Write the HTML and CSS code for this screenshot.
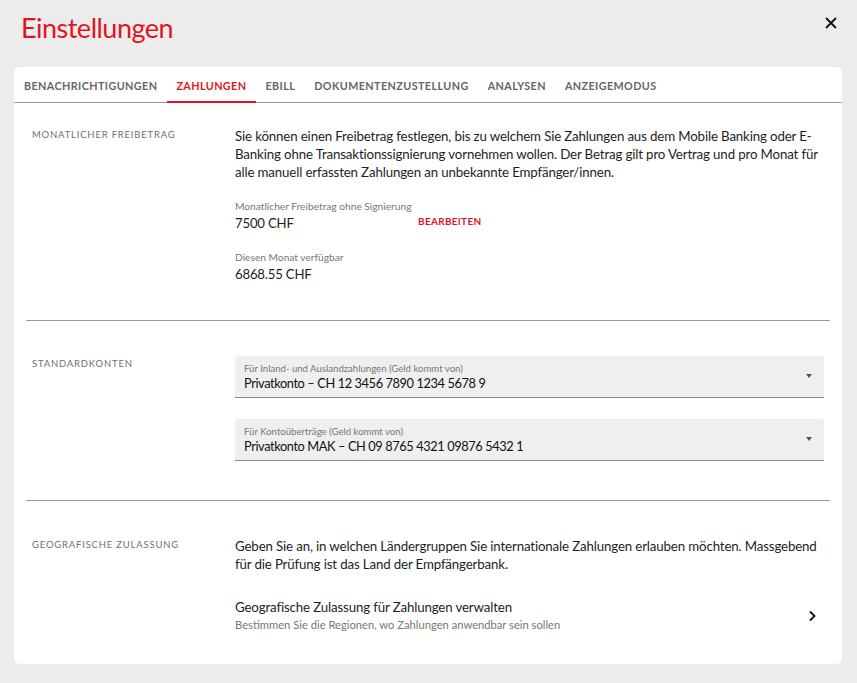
FILE: index.html
```html
<!DOCTYPE html>
<html lang="de">
<head>
<meta charset="utf-8">
<title>Einstellungen</title>
<link rel="stylesheet" href="styles.css">
</head>
<body>
<header class="top">
  <h1 class="title">Einstellungen</h1>
  <button class="close" aria-label="Schliessen">
    <svg width="12" height="12" viewBox="0 0 12 12"><path d="M1 1L11 11M11 1L1 11" stroke="#111" stroke-width="1.8" fill="none"/></svg>
  </button>
</header>
<main class="card">
  <nav class="tabs">
    <span class="tab">Benachrichtigungen</span>
    <span class="tab active">Zahlungen</span>
    <span class="tab">eBill</span>
    <span class="tab">Dokumentenzustellung</span>
    <span class="tab">Analysen</span>
    <span class="tab">Anzeigemodus</span>
  </nav>

  <section class="section first">
    <div class="label">Monatlicher Freibetrag</div>
    <div class="content">
      <p class="text">Sie können einen Freibetrag festlegen, bis zu welchem Sie Zahlungen aus dem Mobile Banking oder E-Banking ohne Transaktionssignierung vornehmen wollen. Der Betrag gilt pro Vertrag und pro Monat für alle manuell erfassten Zahlungen an unbekannte Empfänger/innen.</p>
      <div class="field-row">
        <div class="field">
          <div class="small">Monatlicher Freibetrag ohne Signierung</div>
          <div class="value">7500 CHF</div>
        </div>
        <a class="edit">Bearbeiten</a>
      </div>
      <div class="field">
        <div class="small">Diesen Monat verfügbar</div>
        <div class="value">6868.55 CHF</div>
      </div>
    </div>
  </section>

  <section class="section middle">
    <div class="label">Standardkonten</div>
    <div class="content selects">
      <div class="select">
        <div class="select-text">
          <div class="select-label">Für Inland- und Auslandzahlungen (Geld kommt von)</div>
          <div class="select-value">Privatkonto – CH 12 3456 7890 1234 5678 9</div>
        </div>
        <span class="caret"></span>
      </div>
      <div class="select">
        <div class="select-text">
          <div class="select-label">Für Kontoüberträge (Geld kommt von)</div>
          <div class="select-value">Privatkonto MAK – CH 09 8765 4321 09876 5432 1</div>
        </div>
        <span class="caret"></span>
      </div>
    </div>
  </section>

  <section class="section last">
    <div class="label">Geografische Zulassung</div>
    <div class="content">
      <p class="text">Geben Sie an, in welchen Ländergruppen Sie internationale Zahlungen erlauben möchten. Massgebend für die Prüfung ist das Land der Empfängerbank.</p>
      <div class="link-row">
        <div>
          <div class="link-title">Geografische Zulassung für Zahlungen verwalten</div>
          <div class="link-sub">Bestimmen Sie die Regionen, wo Zahlungen anwendbar sein sollen</div>
        </div>
        <svg class="chev" width="8" height="12" viewBox="0 0 8 12"><path d="M2 1.5L6.5 6L2 10.5" stroke="#111" stroke-width="1.8" fill="none"/></svg>
      </div>
    </div>
  </section>
</main>
</body>
</html>
```

FILE: styles.css
```css
* { box-sizing: border-box; }
html, body { margin: 0; padding: 0; }
body {
  background: #ececec;
  font-family: "Lato", "Noto Sans", sans-serif;
  color: #1e1e1e;
  width: 857px;
  height: 683px;
  overflow: hidden;
}
.top {
  display: flex;
  align-items: center;
  justify-content: space-between;
  height: 57px;
  padding: 0 20px 0 21px;
}
.title {
  margin: 0 0 3px;
  font-weight: 400;
  font-size: 27px;
  color: #e3141e;
  letter-spacing: -0.5px;
}
.close {
  align-self: flex-start;
  margin-top: 17px;
  border: 0;
  background: none;
  padding: 0;
  width: 12px;
  height: 12px;
  display: flex;
}
.card {
  margin: 10px 15px 0 14px;
  background: #fff;
  border-radius: 6px;
  padding-bottom: 30px;
}
.tabs {
  display: flex;
  height: 36px;
  border-bottom: 1px solid #9a9a9a;
}
.tab {
  display: flex;
  align-items: center;
  padding: 2px 9.5px 0;
  font-size: 10.8px;
  font-weight: 700;
  letter-spacing: 0.4px;
  text-transform: uppercase;
  color: #666;
}
.tab:first-child { padding-left: 10px; }
.tab.active {
  color: #e3141e;
  border-bottom: 2px solid #e3141e;
  margin-bottom: -1px;
}
.section {
  display: flex;
  margin: 0 12px;
  border-bottom: 1px solid #9a9a9a;
}
.section.first { padding: 24px 0 37px; }
.section.middle { padding: 35px 0 39px; }
.section.last { border-bottom: 0; padding: 36px 0 0; }
.label {
  width: 209px;
  flex: none;
  padding: 2px 0 0 6px;
  font-size: 9.5px;
  letter-spacing: 0.8px;
  text-transform: uppercase;
  color: #6f6f6f;
}
.content {
  flex: 1;
  padding-right: 6px;
}
.text {
  margin: 0;
  font-size: 13.3px;
  letter-spacing: -0.15px;
  line-height: 18px;
  color: #1e1e1e;
}
.field-row {
  display: flex;
  align-items: flex-end;
  margin-top: 18px;
}
.field-row .field { width: 183px; }
.field-row + .field { margin-top: 18px; }
.small {
  font-size: 10.2px;
  color: #777;
  line-height: 14px;
}
.value {
  font-size: 13.2px;
  letter-spacing: -0.2px;
  line-height: 18px;
  margin-top: 1px;
}
.edit {
  font-size: 10px;
  font-weight: 700;
  letter-spacing: 0.3px;
  text-transform: uppercase;
  color: #e3141e;
  padding-bottom: 5px;
}
.selects {
  display: flex;
  flex-direction: column;
  gap: 21px;
}
.select {
  height: 42px;
  display: flex;
  align-items: center;
  justify-content: space-between;
  background: #efefef;
  border-bottom: 1px solid #8a8a8a;
  border-radius: 3px 3px 0 0;
  padding: 1px 12px 0 9px;
}
.select-label {
  font-size: 9.6px;
  color: #777;
  line-height: 13px;
}
.select-value {
  font-size: 12.8px;
  letter-spacing: -0.4px;
  line-height: 17px;
  color: #111;
}
.caret {
  width: 0;
  height: 0;
  border-left: 3.5px solid transparent;
  border-right: 3.5px solid transparent;
  border-top: 4px solid #555;
  margin-top: -2px;
}
.link-row {
  display: flex;
  align-items: center;
  justify-content: space-between;
  margin-top: 25px;
  padding-right: 8px;
}
.link-title {
  font-size: 13.3px;
  letter-spacing: -0.15px;
  line-height: 18px;
}
.link-sub {
  font-size: 11.2px;
  line-height: 18px;
  color: #777;
}
.chev { flex: none; }
```
